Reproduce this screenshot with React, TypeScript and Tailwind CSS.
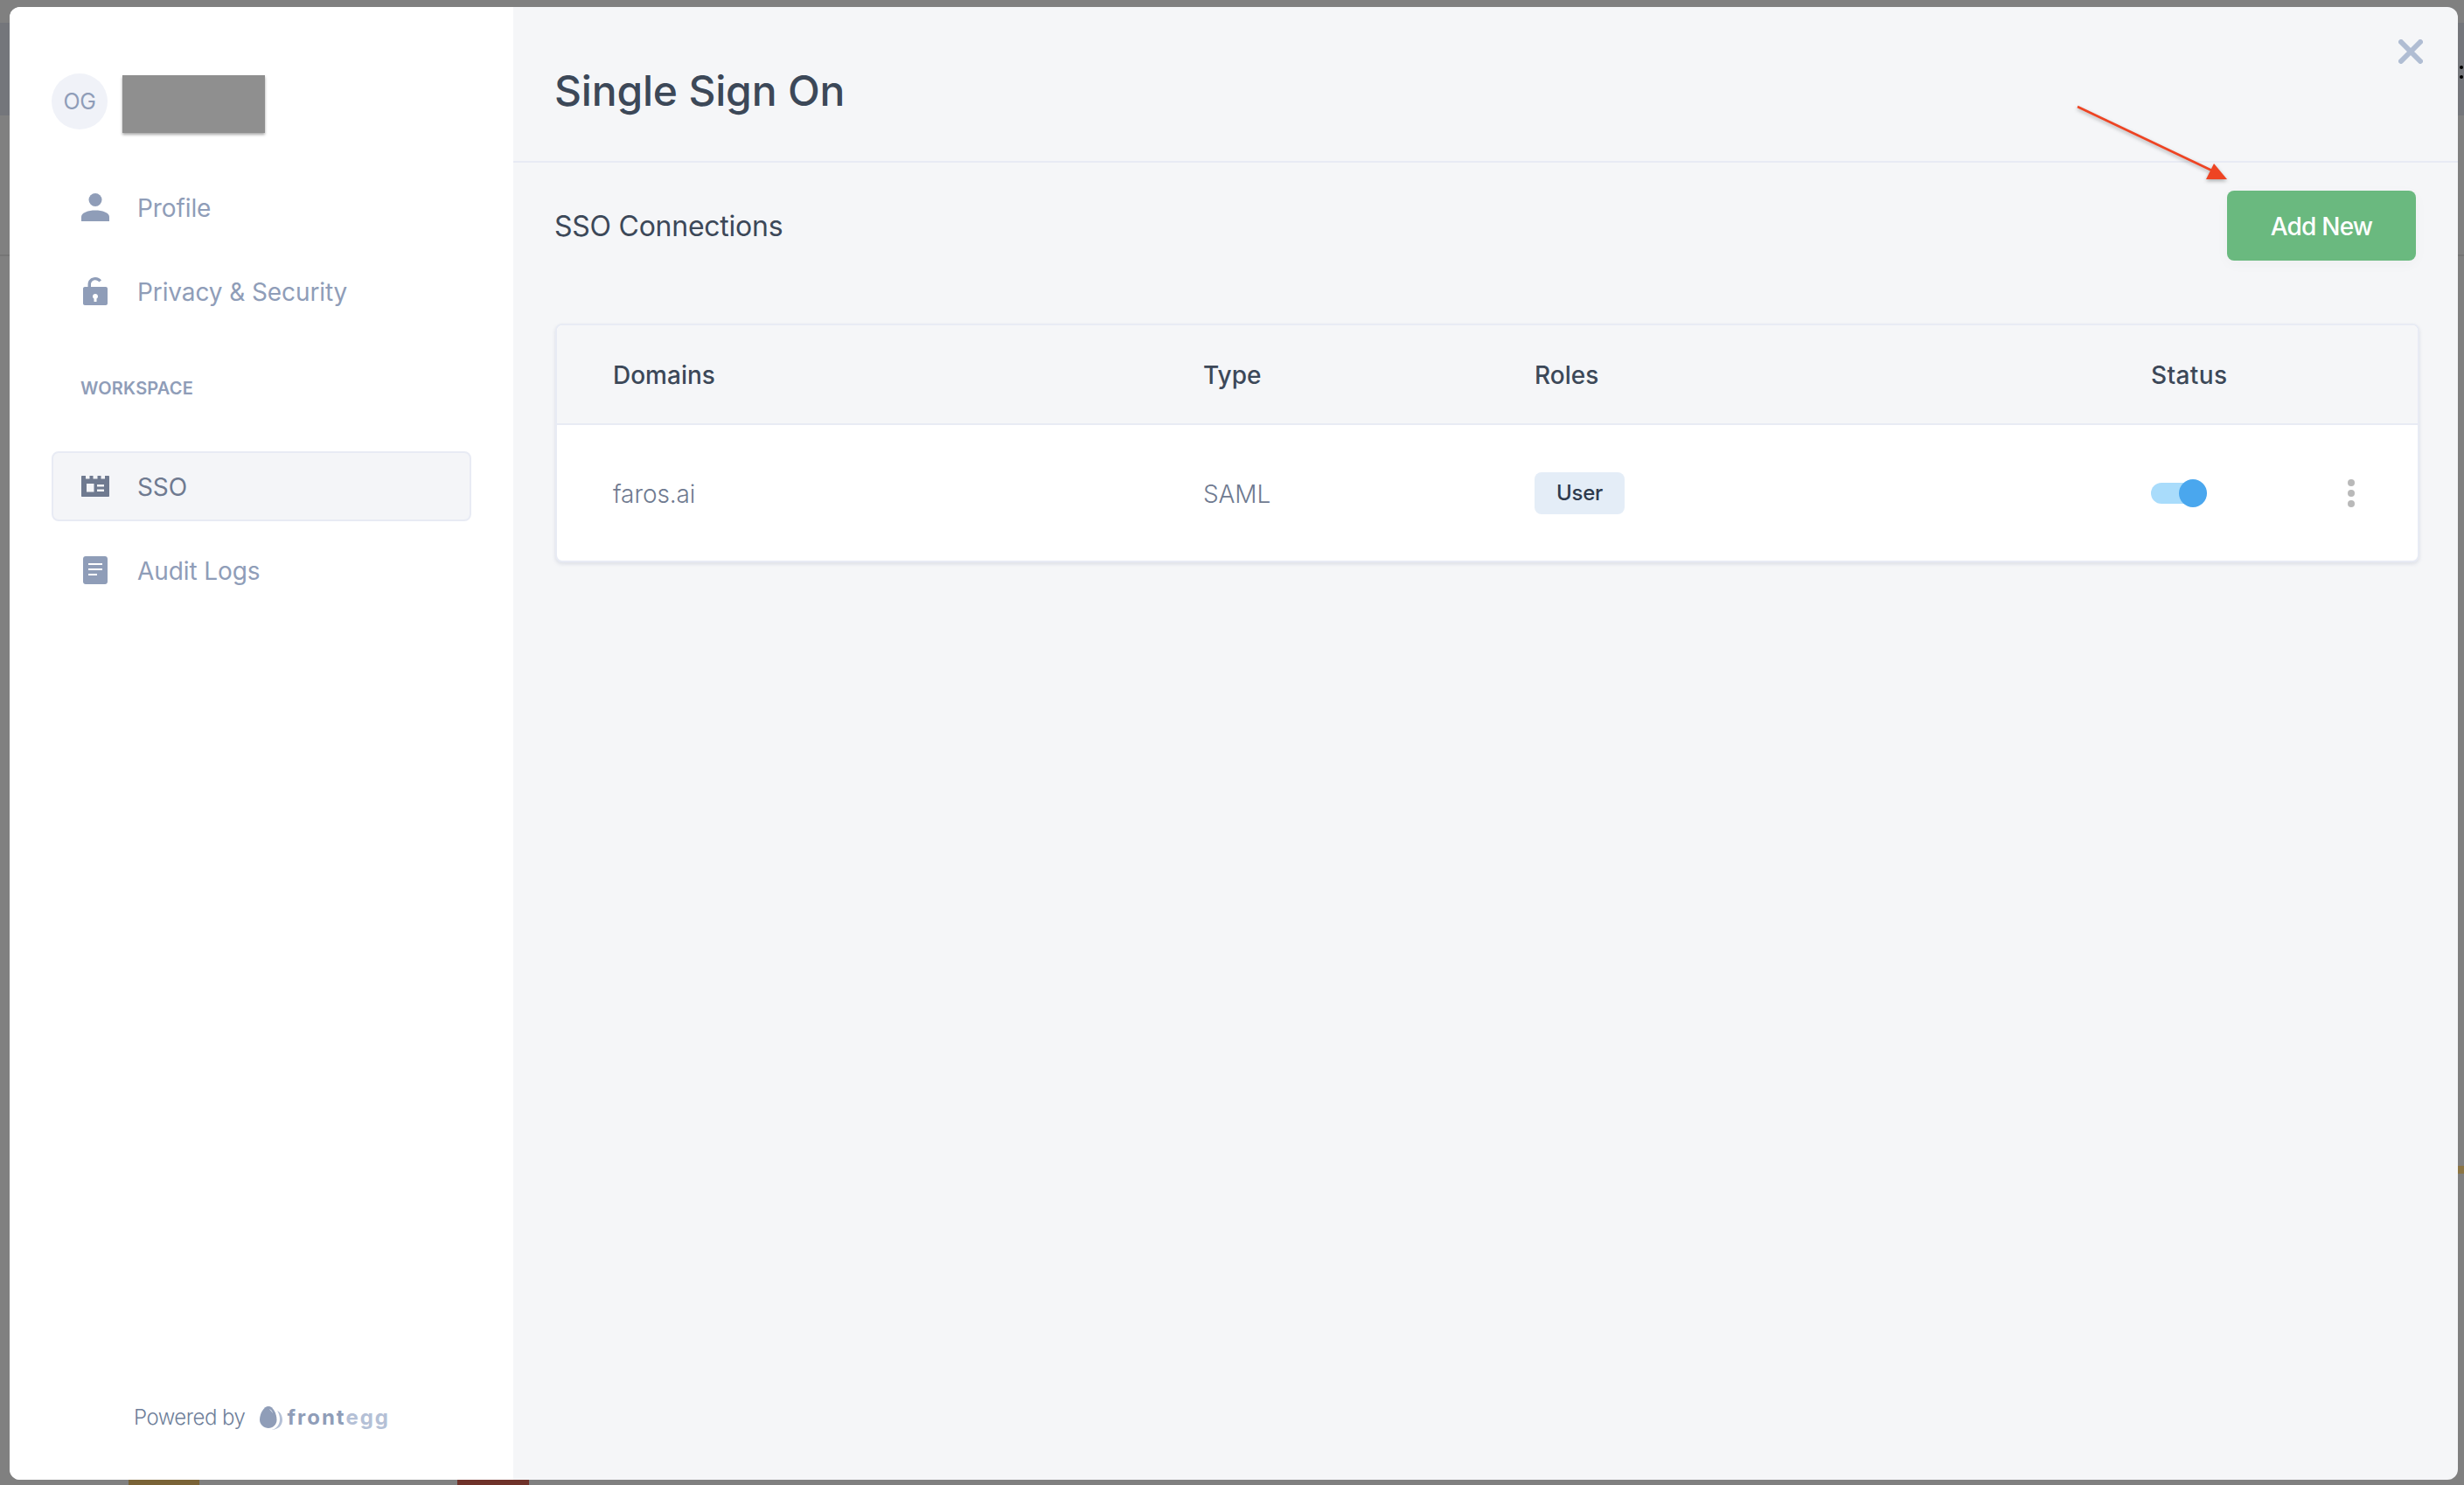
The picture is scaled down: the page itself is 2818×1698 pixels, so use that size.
import type { ReactNode } from 'react';

function PersonIcon() {
  return (
    <svg viewBox="0 0 32 32" className="w-8 h-8 fill-current">
      <circle cx="16" cy="7.5" r="7.5" />
      <path d="M0 32v-5c0-5 8-7.5 16-7.5S32 22 32 27v5H0z" />
    </svg>
  );
}

function LockIcon() {
  return (
    <svg viewBox="0 0 28 32" className="w-7 h-8 fill-current">
      <path fillRule="evenodd" d="M2 11h3.500V8.500C5.500 3.500 9 0 14 0c3 0 5.500 1.300 7 3.500l-2.800 2.100C17.300 4.200 15.800 3.300 14 3.300c-3 0-5 2.200-5 5.200V11h17c1.100 0 2 .9 2 2v17c0 1.100-.9 2-2 2H2c-1.100 0-2-.9-2-2V13c0-1.100.9-2 2-2zm12 8c-1.700 0-3 1.300-3 3 0 1.100.6 2 1.500 2.600V28h3v-3.400c.9-.6 1.500-1.500 1.500-2.600 0-1.700-1.300-3-3-3z" />
    </svg>
  );
}

function SsoIcon() {
  return (
    <svg viewBox="0 0 32 24" className="w-8 h-6 fill-current">
      <path fillRule="evenodd" d="M1 0h4v3.500h4.500V0h4v3.500h5V0h4v3.500h4.500V0h4c.6 0 1 .4 1 1v22c0 .6-.4 1-1 1H1c-.6 0-1-.4-1-1V1c0-.6.4-1 1-1zm5 9v9.500h8.500V9H6zm12 1v2.500h8V10h-8zm0 5.500V18h8v-2.500h-8z" />
    </svg>
  );
}

function LogIcon() {
  return (
    <svg viewBox="0 0 28 32" className="w-7 h-8 fill-current">
      <path fillRule="evenodd" d="M3 0h22c1.700 0 3 1.300 3 3v26c0 1.700-1.300 3-3 3H3c-1.700 0-3-1.300-3-3V3c0-1.700 1.300-3 3-3zm3 8v2h16V8H6zm0 6v2h16v-2H6zm0 6v2h10v-2H6z" />
    </svg>
  );
}

function NavItem({ icon, label, active }: { icon: ReactNode; label: string; active?: boolean }) {
  return (
    <div
      className={
        active
          ? 'h-20 flex items-center rounded-lg border-2 border-[#e8ebf4] bg-[#f4f5f8] text-[#6f7a90]'
          : 'h-20 flex items-center rounded-lg border-2 border-transparent text-[#8f9db8]'
      }
    >
      <div className="w-8 ml-8 flex justify-center">{icon}</div>
      <span className="ml-8 pt-[1px] text-[28px] tracking-[-0.1px]">{label}</span>
    </div>
  );
}

export default function App() {
  return (
    <div
      className="relative h-[1698px] overflow-hidden bg-[#808080] pl-[11px] pr-[7px] pt-2 pb-[6px]"
      style={{ fontFamily: 'Inter, "Noto Sans", sans-serif' }}
    >
      {/* what shows of the page behind the modal */}
      <div className="absolute left-0 top-[26px] h-[106px] w-full bg-[#74767b]" />
      <div className="absolute left-0 top-[291px] h-[2px] w-full bg-[#757575]" />
      <div className="absolute left-[147px] bottom-0 h-[6px] w-[81px] bg-[#7a6337]" />
      <div className="absolute left-[523px] bottom-0 h-[6px] w-[82px] bg-[#6f322a]" />
      <div className="absolute right-0 top-[1333px] h-[9px] w-[7px] bg-[#8c7544]" />
      <div className="absolute right-[1px] top-[75px] h-[4px] w-[4px] rounded-full bg-black" />
      <div className="absolute right-[1px] top-[86px] h-[4px] w-[4px] rounded-full bg-black" />

      <div className="relative flex h-full overflow-hidden rounded-xl bg-[#f5f6f8]">
        <aside className="flex w-[576px] shrink-0 flex-col bg-white pl-12 pr-[48px] pt-[76px] pb-[53px]">
          <div className="flex h-[68px] items-start">
            <div className="flex h-16 w-16 items-center justify-center rounded-full bg-[#f0f2f8] pt-[2px] text-[25px] tracking-[-0.5px] text-[#8f9db8]">
              OG
            </div>
            <div className="ml-[17px] mt-[2px] h-[66px] w-[163px] bg-[#8f8f8f] shadow-[0_2px_3px_rgba(0,0,0,0.35)]" />
          </div>

          <nav className="mt-[45px] flex flex-col gap-4">
            <NavItem icon={<PersonIcon />} label="Profile" />
            <NavItem icon={<LockIcon />} label="Privacy & Security" />
          </nav>

          <div className="mt-[60px] ml-[33px] h-[22px] text-[20px] font-semibold leading-[22px] tracking-[0.2px] text-[#8f9db8]">
            WORKSPACE
          </div>

          <nav className="mt-[61px] flex flex-col gap-4">
            <NavItem icon={<SsoIcon />} label="SSO" active />
            <NavItem icon={<LogIcon />} label="Audit Logs" />
          </nav>

          <div className="mt-auto ml-[94px] flex items-center">
            <span className="text-[24px] font-light tracking-[-0.5px] text-[#6f7f9a]">Powered by</span>
            <svg viewBox="0 0 26 27" className="ml-[17px] h-[27px] w-[26px]">
              <path d="M20 5c4.500 2 6 7 6 10.500C26 22 21 27 13 27c7-1 10-7 10-12 0-4-1-7-3-10z" fill="#b4c0d6" />
              <path d="M10 0c5 0 9.500 8 9.500 15.500C19.500 21 15 25 10 25S0 21 0 15.500C0 8 5 0 10 0z" fill="#8f9db8" />
              <path d="M11 3c2 .5 3.500 2.500 4 5-1.500-2-3-3.500-4-5z" fill="#dfe5ef" />
            </svg>
            <span className="ml-[5px] text-[24px] font-bold tracking-[2px] text-[#8f9db8]">
              front<span className="text-[#b4c0d6]">egg</span>
            </span>
          </div>
        </aside>

        <main className="min-w-0 flex-1">
          <header className="flex h-[178px] items-center border-b-2 border-[#e8ebf4] pl-[47px] pt-4">
            <h1 className="text-[48px] font-medium tracking-[-0.2px] text-[#3c4858]">Single Sign On</h1>
          </header>

          <div className="mt-8 flex h-20 items-center justify-between pl-[47px] pr-[48px]">
            <span className="pt-[2px] text-[32px] tracking-[-0.25px] text-[#3c4858]">SSO Connections</span>
            <button className="flex h-20 w-[216px] items-center justify-center rounded-lg bg-[#6ab97f] pt-[2px] text-[28px] font-medium tracking-[-0.8px] text-white shadow-[0_4px_16px_rgba(0,0,0,0.03)]">
              Add New
            </button>
          </div>

          <div className="ml-12 mr-[44px] mt-[72px] overflow-hidden rounded-lg border-2 border-[#e8ebf4] bg-white shadow-[0_2px_4px_rgba(120,130,160,0.2)]">
            <div className="grid h-[114px] grid-cols-[675px_379px_705px_1fr] items-center border-b-2 border-[#e8ebf4] bg-[#f5f6f8] pl-16 pt-[1px] text-[28px] font-medium text-[#3c4858]">
              <span>Domains</span>
              <span>Type</span>
              <span>Roles</span>
              <span className="tracking-[0.4px]">Status</span>
            </div>
            <div className="grid h-[155px] grid-cols-[675px_379px_705px_1fr] items-center pl-16 text-[28px] font-light tracking-[-0.1px] text-[#6f7a90]">
              <span className="pt-[2px]">faros.ai</span>
              <span className="pt-[2px]">SAML</span>
              <div>
                <span className="inline-flex h-12 w-[103px] items-center justify-center rounded-lg bg-[#e4edf7] text-[24px] font-medium tracking-[-0.3px] text-[#2e3a4d]">
                  User
                </span>
              </div>
              <div className="flex items-center">
                <div className="relative h-6 w-[60px] rounded-full bg-[#a9dcfb]">
                  <div className="absolute -top-1 left-8 h-8 w-8 rounded-full bg-[#4aa7ee]" />
                </div>
                <div className="ml-[165px] flex flex-col gap-1">
                  <div className="h-2 w-2 rounded-full bg-[#b9b9b9]" />
                  <div className="h-2 w-2 rounded-full bg-[#b9b9b9]" />
                  <div className="h-2 w-2 rounded-full bg-[#b9b9b9]" />
                </div>
              </div>
            </div>
          </div>
        </main>

        {/* close button */}
        <svg viewBox="0 0 28 28" className="absolute right-[40px] top-[37px] h-7 w-7 stroke-[#b0bdd3]" fill="none" strokeWidth="6" strokeLinecap="round">
          <path d="M3 3l22 22M25 3L3 25" />
        </svg>

        {/* red annotation arrow */}
        <svg viewBox="0 0 180 90" className="absolute left-[2363px] top-[112px] h-[90px] w-[180px] drop-shadow-[0_2px_2px_rgba(0,0,0,0.3)]">
          <path d="M2 2L160 77" stroke="#ee4423" strokeWidth="2.500" />
          <path d="M173 85L158 67l-9 18z" fill="#ee4423" />
        </svg>
      </div>
    </div>
  );
}
